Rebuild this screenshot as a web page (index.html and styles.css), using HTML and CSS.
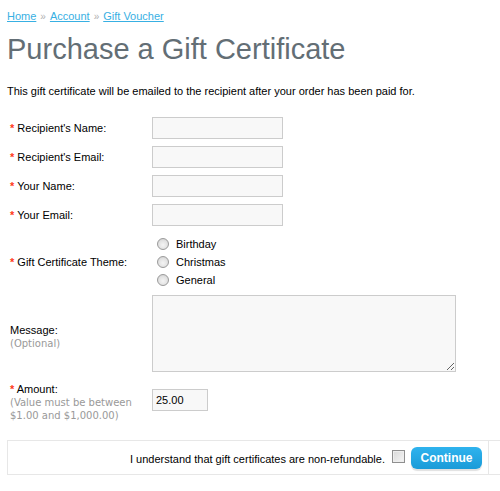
FILE: index.html
```html
<!DOCTYPE html>
<html>
<head>
<meta charset="utf-8">
<link rel="stylesheet" href="styles.css">
</head>
<body>
<div class="page">
  <div class="breadcrumb">
    <a href="#">Home</a><span class="sep">»</span><a href="#">Account</a><span class="sep">»</span><a href="#">Gift Voucher</a>
  </div>
  <h1 class="title">Purchase a Gift Certificate</h1>
  <p class="intro">This gift certificate will be emailed to the recipient after your order has been paid for.</p>

  <div class="form">
    <div class="row">
      <div class="label"><span class="req">*</span> Recipient's Name:</div>
      <div class="field"><input class="text" type="text"></div>
    </div>
    <div class="row">
      <div class="label"><span class="req">*</span> Recipient's Email:</div>
      <div class="field"><input class="text" type="text"></div>
    </div>
    <div class="row">
      <div class="label"><span class="req">*</span> Your Name:</div>
      <div class="field"><input class="text" type="text"></div>
    </div>
    <div class="row">
      <div class="label"><span class="req">*</span> Your Email:</div>
      <div class="field"><input class="text" type="text"></div>
    </div>
    <div class="row row-theme">
      <div class="label"><span class="req">*</span> Gift Certificate Theme:</div>
      <div class="field radios">
        <label class="radio"><input type="radio" name="t"><span>Birthday</span></label>
        <label class="radio"><input type="radio" name="t"><span>Christmas</span></label>
        <label class="radio"><input type="radio" name="t"><span>General</span></label>
      </div>
    </div>
    <div class="row row-msg">
      <div class="label label-msg">Message:<br><span class="note">(Optional)</span></div>
      <div class="field"><textarea class="area"></textarea></div>
    </div>
    <div class="row row-amount">
      <div class="label"><span class="req">*</span> Amount:<br><span class="note">(Value must be between<br>$1.00 and $1,000.00)</span></div>
      <div class="field"><input class="text amount" type="text" value="25.00"></div>
    </div>
  </div>

  <div class="buttons">
    <div class="right">
      <span class="agree">I understand that gift certificates are non-refundable.</span>
      <input type="checkbox" class="check">
      <a href="#" class="button">Continue</a>
    </div>
    <div class="edge"></div>
  </div>
</div>
</body>
</html>
```

FILE: styles.css
```css
html { overflow: hidden; }
body {
  margin: 0;
  background: #fff;
  font-family: "Liberation Sans", Arial, sans-serif;
  font-size: 11px;
  color: #000;
}
.page {
  padding: 9px 0 0 7px;
}
.breadcrumb {
  line-height: 14px;
  color: #b0b0b0;
}
.breadcrumb a {
  color: #38b0e3;
  text-decoration: underline;
}
.breadcrumb .sep {
  margin: 0 4px;
  font-size: 10px;
}
.title {
  margin: 8px 0 0 0;
  font-weight: normal;
  font-size: 29px;
  line-height: 34px;
  color: #636e75;
}
.intro {
  margin: 18px 0 0 0;
  line-height: 14px;
}
.form {
  margin-top: 19px;
  display: flex;
  flex-direction: column;
  gap: 7px;
}
.row {
  display: grid;
  grid-template-columns: 145px 1fr;
  align-items: center;
  min-height: 22px;
}
.label {
  padding-left: 3px;
  line-height: 13px;
}
.label-msg { padding-top: 6px; }
.req {
  color: #ff3a1a;
  font-weight: bold;
}
.note {
  font-family: "DejaVu Sans", Verdana, sans-serif;
  font-size: 10px;
  color: #999;
}
.text {
  box-sizing: border-box;
  width: 131px;
  height: 22px;
  margin: 0;
  padding: 1px 3px;
  background: #f8f8f8;
  border: 1px solid #ccc;
  font-family: "Liberation Sans", Arial, sans-serif;
  font-size: 11px;
  color: #000;
  outline: none;
}
.amount { width: 56px; margin-bottom: 6px; }
.row-theme { margin-top: 2px; }
.radios {
  display: flex;
  flex-direction: column;
  gap: 0;
}
.radio {
  display: flex;
  align-items: center;
  height: 18px;
  gap: 7px;
  padding-left: 5px;
}
.radio input {
  appearance: none;
  -webkit-appearance: none;
  margin: 0;
  width: 12px;
  height: 12px;
  border-radius: 50%;
  border: 1px solid #9a9a9a;
  background: radial-gradient(circle at 50% 60%, #f4f4f4 0%, #e2e2e2 55%, #c9c9c9 100%);
  box-sizing: border-box;
}
.row-msg { margin-top: -1px; }
.area {
  box-sizing: border-box;
  display: block;
  width: 304px;
  height: 77px;
  margin: 0;
  background: #f8f8f8;
  border: 1px solid #ccc;
  outline: none;
  resize: both;
}
.row-amount { margin-top: 4px; }
.buttons {
  margin-top: 18px;
  display: flex;
  height: 33px;
  border-top: 1px solid #e7e7e7;
  border-bottom: 1px solid #e7e7e7;
  border-left: 1px solid #e7e7e7;
}
.right {
  flex: 1;
  display: flex;
  align-items: center;
  justify-content: flex-end;
  padding-right: 6px;
}
.edge {
  width: 11px;
  border-left: 1px solid #e7e7e7;
}
.agree { margin-right: 7px; margin-top: 2px; }
.check {
  appearance: none;
  -webkit-appearance: none;
  margin: 0 6px 3px 0;
  width: 13px;
  height: 13px;
  box-sizing: border-box;
  border: 1px solid #8f8f8f;
  background: linear-gradient(135deg, #d9d9d9 0%, #f5f5f5 100%);
  box-shadow: inset 0 0 0 1px #eee;
}
.button {
  display: inline-block;
  box-sizing: border-box;
  width: 71px;
  height: 22px;
  line-height: 22px;
  text-align: center;
  border-radius: 6px;
  background: linear-gradient(#2fb3ee, #1a9bd8);
  box-shadow: 0 2px 1px #e0e0e0;
  color: #fff;
  font-weight: bold;
  font-size: 12px;
  text-decoration: none;
}
```
